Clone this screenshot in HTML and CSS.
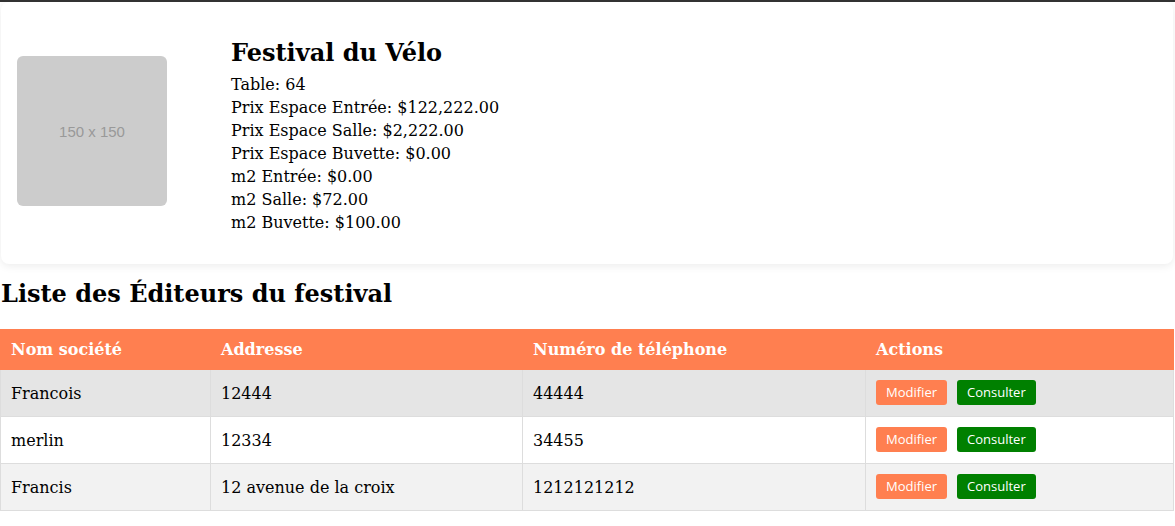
FILE: index.html
```html
<!DOCTYPE html>
<html lang="fr">
<head>
<meta charset="utf-8">
<title>Festival du Vélo</title>
<link rel="stylesheet" href="styles.css">
</head>
<body>
<div class="topbar"></div>
<main class="page">
  <section class="card">
    <div class="thumb">150 x 150</div>
    <div class="info">
      <h1 class="title">Festival du Vélo</h1>
      <div class="line">Table: 64</div>
      <div class="line">Prix Espace Entrée: $122,222.00</div>
      <div class="line">Prix Espace Salle: $2,222.00</div>
      <div class="line">Prix Espace Buvette: $0.00</div>
      <div class="line">m2 Entrée: $0.00</div>
      <div class="line">m2 Salle: $72.00</div>
      <div class="line">m2 Buvette: $100.00</div>
    </div>
  </section>
  <h2 class="section-title">Liste des Éditeurs du festival</h2>
  <table class="list">
    <colgroup>
      <col class="c1"><col class="c2"><col class="c3"><col class="c4">
    </colgroup>
    <thead>
      <tr><th>Nom société</th><th>Addresse</th><th>Numéro de téléphone</th><th>Actions</th></tr>
    </thead>
    <tbody>
      <tr class="hover">
        <td>Francois</td><td>12444</td><td>44444</td>
        <td class="act"><div class="actions"><button class="btn btn-edit">Modifier</button><button class="btn btn-view">Consulter</button></div></td>
      </tr>
      <tr>
        <td>merlin</td><td>12334</td><td>34455</td>
        <td class="act"><div class="actions"><button class="btn btn-edit">Modifier</button><button class="btn btn-view">Consulter</button></div></td>
      </tr>
      <tr class="alt">
        <td>Francis</td><td>12 avenue de la croix</td><td>1212121212</td>
        <td class="act"><div class="actions"><button class="btn btn-edit">Modifier</button><button class="btn btn-view">Consulter</button></div></td>
      </tr>
    </tbody>
  </table>
</main>
</body>
</html>
```
FILE: styles.css
```css
html, body {
  margin: 0;
  padding: 0;
  background: #fff;
}
body {
  font-family: "DejaVu Serif", serif;
  font-size: 16px;
  color: #000;
}
.topbar {
  height: 2px;
  background: #333;
}
.page {
  padding: 0 2px 0 1px;
}
.card {
  display: flex;
  align-items: flex-start;
  gap: 64px;
  padding: 36px 16px 30px;
  background: #fff;
  border-radius: 8px;
  box-shadow: 0 2px 8px rgba(0, 0, 0, 0.08);
}
.thumb {
  flex: none;
  width: 150px;
  height: 150px;
  margin-top: 18px;
  background: #ccc;
  border-radius: 6px;
  color: #999;
  font-family: "Liberation Sans", Arial, sans-serif;
  font-size: 15px;
  display: flex;
  align-items: center;
  justify-content: center;
}
.title {
  margin: 0 0 5px;
  font-size: 24px;
  line-height: 30px;
  font-weight: bold;
}
.line {
  line-height: 23px;
}
.section-title {
  margin: 15px 0 20px;
  font-size: 24px;
  line-height: 30px;
  font-weight: bold;
}
.list {
  width: 1173px;
  margin-left: -1px;
  border-collapse: collapse;
  table-layout: fixed;
}
.c1 { width: 210px; }
.c2 { width: 312px; }
.c3 { width: 343px; }
.c4 { width: 308px; }
.list th {
  background: #ff7f50;
  color: #fff;
  text-align: left;
  font-weight: bold;
  padding: 10px 10px 9px;
  line-height: 20px;
  border: 1px solid #ff7f50;
}
.list td {
  padding: 14px 10px 12px;
  line-height: 20px;
  border: 1px solid #ddd;
}
.list td.act {
  padding: 10px 10px 11px;
}
.list tr.hover td { background: #e5e5e5; }
.list tr.alt td { background: #f2f2f2; }
.actions {
  display: flex;
  gap: 10px;
  align-items: center;
}
.btn {
  height: 25px;
  padding: 0 10px;
  border: none;
  border-radius: 3px;
  color: #fff;
  font-family: "Open Sans", "Noto Sans", sans-serif;
  font-size: 13px;
  line-height: 25px;
}
.btn-edit { background: #ff7f50; }
.btn-view { background: #008000; }
```
